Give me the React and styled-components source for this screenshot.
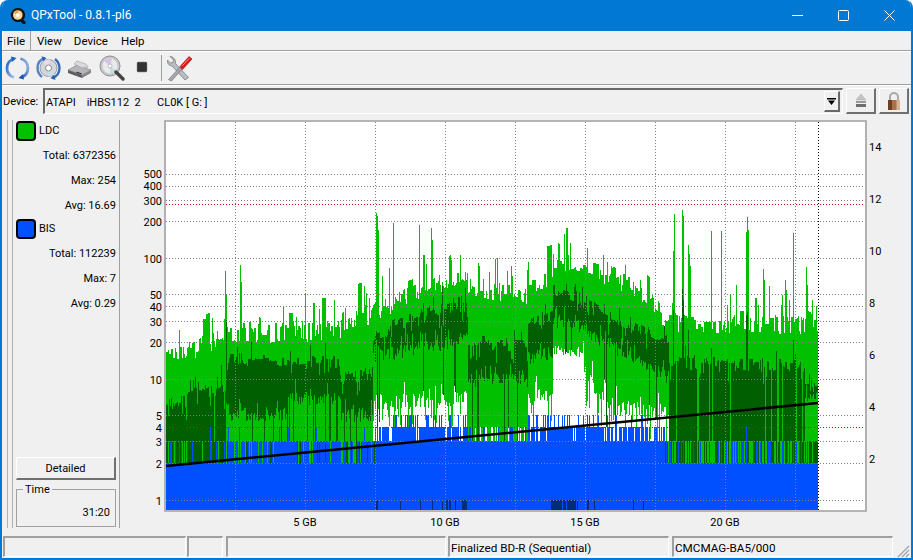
import React, { useMemo } from "react";
import styled, { createGlobalStyle } from "styled-components";

const Global = createGlobalStyle`
  html, body { margin: 0; padding: 0; background: #fff; }
  * { box-sizing: border-box; }
`;

const UI = `"Roboto", "Liberation Sans", sans-serif`;

const Window = styled.div`
  width: 913px; height: 560px; display: flex; flex-direction: column; overflow: hidden;
  background: #f0f0f0; border: solid #0078d4; border-width: 0 2px 2px 2px;
  border-radius: 8px 8px 0 0; font: 11px ${UI}; color: #000;
`;
const TitleBar = styled.div`
  height: 31px; flex: none; margin: 0 -2px; background: #0078d4; color: #fff; display: flex; align-items: center; padding: 0 1px 0 10px;
`;
const TitleText = styled.span` margin-left: 5px; font-size: 12px; flex: 1; position: relative; top: -0.5px; `;
const WinBtn = styled.div` width: 46px; height: 31px; display: flex; align-items: center; justify-content: center; `;
const MenuBar = styled.div`
  height: 20px; flex: none; display: flex; align-items: stretch; border-bottom: 1px solid #a0a0a0; font-size: 11.5px;
`;
const MenuItem = styled.div`
  display: flex; align-items: center; padding: 0 ${p => p.$pad}px;
  ${p => p.$active && `border-right: 1px solid #a0a0a0; border-left: 1px solid #fff; padding: 0 4px; width: 29px; background: #eee;`}
`;
const ToolBar = styled.div`
  height: 34px; flex: none; display: flex; align-items: center; padding-left: 3px; gap: 6px;
  border-top: 1px solid #fff; border-bottom: 1px solid #a0a0a0;
`;
const ToolSep = styled.div` width: 1px; height: 26px; background: #a0a0a0; margin-right: -1px; `;
const DeviceRow = styled.div`
  height: 31px; flex: none; display: flex; align-items: flex-start; padding: 2px 0 0 1px; border-top: 1px solid #fff;
`;
const DeviceLabel = styled.span` width: 40px; line-height: 27px; `;
const Combo = styled.div`
  width: 800px; height: 26px; border: solid; border-width: 2px 1px 1px 2px; border-color: #696969 #fff #fff #696969;
  background: #f0f0f0; display: flex; align-items: center; padding-left: 1px; justify-content: space-between; white-space: pre;
`;
const ComboText = styled.span` position: relative; top: 0.5px; `;
const ComboArrow = styled.div`
  width: 16px; height: 21px; margin-right: 2px; border: solid; border-width: 1px 2px 2px 1px; border-color: #fff #696969 #696969 #fff;
  display: flex; align-items: center; justify-content: center;
`;
const SquareBtn = styled.div`
  width: 30px; height: 26px; margin-left: 3px; border: solid; border-width: 1px 2px 2px 1px;
  border-color: #fff #707070 #707070 #fff; display: flex; align-items: center; justify-content: center;
`;
const Main = styled.div` flex: 1; min-height: 0; display: flex; padding: 4px 0 0 5px; `;
const Strip = styled.div` width: 6px; height: 408px; border: solid #b0b0b0; border-width: 0 1px; `;
const Sidebar = styled.div`
  width: 107px; height: 408px; border-right: 1px solid #a0a0a0; padding-left: 3px; display: flex; flex-direction: column;
`;
const LegendHead = styled.div` height: 21px; display: flex; align-items: center; gap: 3px; margin-bottom: 2px; `;
const Swatch = styled.div`
  width: 20px; height: 20px; border-radius: 4px; border: 2px solid #000; background: ${p => p.$c};
`;
const Stat = styled.div` height: 25px; line-height: 25px; text-align: right; padding-right: 3px; white-space: pre; `;
const Detailed = styled.div`
  margin-top: auto; width: 100px; height: 23px; display: flex; align-items: center; justify-content: center;
  border: solid; border-width: 1px 2px 2px 1px; border-color: #fff #707070 #707070 #fff;
`;
const TimeBox = styled.fieldset`
  margin: 5px 0 1px 0; padding: 0 4px 0 0; width: 100px; height: 42px; border: 1px solid #a0a0a0; text-align: right;
  legend { margin-left: 6px; padding: 0 2px; line-height: 9px; text-align: left; }
`;
const TimeVal = styled.div` line-height: 14px; margin-top: 12px; padding-right: 1px; `;
const ChartWrap = styled.div` flex: 1; margin-top: -4px; margin-left: 10px; `;
const StatusBar = styled.div` height: 22px; flex: none; margin-top: 6px; display: flex; padding-left: 1px; `;
const Cell = styled.div`
  width: ${p => p.$w}px; margin-right: ${p => p.$mr || 0}px; height: 21px; border: solid; border-width: 2px 1px 1px 2px;
  border-color: #a0a0a0 #fff #fff #a0a0a0; padding-left: 1px; line-height: 20px; font-size: 11.7px; white-space: nowrap;
`;
const Grip = styled.svg` flex: none; margin-left: 1px; align-self: flex-end; `;

const ChartText = styled.text`
  font: 11px ${UI}; fill: #000;
`;

function rng(seed) {
  let s = seed;
  return () => { s = (s * 1664525 + 1013904223) >>> 0; return s / 4294967296; };
}
// x, light top, dark top, dark bottom, lower-light start
const KF = [
  [166, 352, 405, 999, 999], [186, 352, 402, 999, 999], [188, 350, 385, 999, 999], [204, 345, 385, 999, 999],
  [206, 345, 395, 999, 999], [226, 335, 385, 400, 999], [228, 332, 360, 415, 999], [288, 333, 360, 415, 999],
  [289, 333, 362, 398, 999], [340, 330, 362, 398, 999], [341, 322, 378, 415, 999], [372, 315, 372, 415, 999],
  [373, 312, 338, 358, 402], [400, 300, 322, 352, 402], [467, 272, 300, 338, 400],
  [468, 286, 342, 380, 999], [527, 296, 345, 380, 999], [528, 284, 322, 358, 398], [552, 282, 316, 352, 395],
  [553, 262, 290, 320, 350], [578, 266, 298, 328, 352], [600, 275, 312, 340, 398], [640, 290, 327, 362, 412],
  [668, 322, 342, 378, 414], [669, 324, 362, 999, 999], [804, 324, 366, 999, 999], [805, 320, 380, 400, 999], [818, 325, 380, 398, 999],
];
const BL = [
  [228, .25, .03, 0, .12], [375, .75, .06, 0, .4], [400, 1, .85, .25, 0], [467, 1, .85, .35, 0], [527, .98, .12, 0, 0],
  [552, 1, .75, .55, 0], [600, 1, .9, .3, 0], [665, 1, .7, .08, 0], [819, .3, .04, 0, .28],
];
const SPIKES = {
  212: 318, 225: 271, 226: 295, 240: 265, 241: 282, 283: 307, 293: 321, 305: 293, 319: 309, 345: 308, 350: 324, 365: 305,
  376: 213, 377: 216, 378: 230, 393: 223, 389: 268, 419: 225, 431: 228, 432: 240, 497: 258, 460: 255, 489: 272,
  527: 270, 564: 234, 570: 243, 587: 248, 603: 255, 607: 262, 612: 268, 625: 265,
  674: 214, 673: 251, 682: 210, 683: 216, 688: 245, 689: 254, 690: 266, 711: 231, 721: 231, 736: 285, 747: 217, 748: 230, 746: 232, 763: 269, 764: 280,
  769: 286, 785: 280, 786: 290, 793: 233, 806: 267, 807: 285, 812: 300, 816: 306,
};
const DARK_SPIKES = { 673: 310, 682: 289, 683: 300, 688: 330, 746: 315, 747: 312, 793: 340, 226: 320 };
const Y3 = 441, Y2 = 463, Y4 = 427, Y5 = 415, BOT = 510;

function interp(x) {
  for (let i = 0; i < KF.length - 1; i++) {
    const a = KF[i], b = KF[i + 1];
    if (x >= a[0] && x <= b[0]) {
      const t = (x - a[0]) / (b[0] - a[0] || 1);
      return [1, 2, 3, 4].map(k => (a[k] > 900 || b[k] > 900) ? (t < 1 && a[k] > 900 ? 999 : b[k]) : a[k] + (b[k] - a[k]) * t);
    }
  }
  return KF[KF.length - 1].slice(1);
}

function buildPaths() {
  const r = rng(77);
  const p = { light: "", dark: "", blue: "", navy: "", deep: "" };
  const rect = (k, x, y1, y2) => { if (y2 > y1) p[k] += `M${x} ${Math.round(y1)}h1V${Math.round(y2)}h-1z`; };
  let hold = 0, holdD = 0;
  for (let x = 166; x < 818; x++) {
    const [lt0, dh0, dl0, g0] = interp(x);
    const b = BL.find(s => x < s[0]);
    let blue = Y2;
    if (r() < b[1]) blue = Y3;
    if (blue === Y3 && r() < b[2]) blue = Y4;
    if (blue === Y4 && r() < b[3]) blue = Y5;
    if (r() > 0.35) { hold = (r() - .5) * 20 + (r() < .13 ? -14 - r() * 18 : 0); }
    if (r() > 0.45) { holdD = (r() - .5) * 14; }
    let lt = lt0 + hold;
    if (SPIKES[x]) lt = SPIKES[x];
    let dh = dh0 + holdD + (r() < .08 ? 8 + r() * 10 : 0);
    if (r() < .06) dh -= 6 + r() * 12;
    if (DARK_SPIKES[x]) dh = DARK_SPIKES[x];
    const dl = dl0 > 900 ? 999 : dl0 + (r() - .5) * 14 + (r() < .15 ? -12 : 0);
    const inWhite = x >= 553 && x < 578;
    let g = g0 > 900 ? 999 : inWhite ? g0 + (r() - .5) * 10 : g0 + (r() - .5) * 16 + (r() < .2 ? 16 + r() * 20 : 0) + (r() < .12 ? -14 : 0);
    if (inWhite && r() < .03) g = 385 + r() * 30;
    const gapAtBlue = g0 < 900 || (x > 467 && x < 527 && r() < .2);
    rect("blue", x, blue, BOT);
    if (blue === Y2) {
      rect(r() < b[4] * 1.6 ? "light" : "dark", x, Y3, Y2);
    }
    let cursor = Math.min(blue, Y3);
    if (x > 467 && x < 527 && gapAtBlue) { g = Y4; }
    if (g < 900) cursor = Math.min(cursor, g);
    const lowTop = Math.max(dl > 900 ? dh : dl, lt);
    if (dl < 900) {
      const c = r() < .08 ? "dark" : "light";
      rect(c, x, lowTop, cursor);
      rect("dark", x, Math.max(dh, lt), lowTop);
    } else {
      rect(r() < .05 && cursor > 415 ? "light" : "dark", x, Math.max(dh, lt), cursor);
    }
    rect("light", x, lt, Math.max(dh, lt));
  }
  [[180, 463, 499], [213, 463, 499], [797, 463, 498]].forEach(([x, a, c]) => rect("deep", x, a, c));
  [[470, 441, 462], [481, 441, 462], [491, 441, 462], [516, 441, 462]].forEach(([x, a, c]) => rect("light", x, a, c));
  [[376, 2], [400, 1], [420, 1], [432, 1], [442, 1], [446, 2], [449, 2], [455, 1], [462, 5], [551, 11], [563, 3], [567, 9], [577, 1], [587, 2], [594, 1], [377, 1], [633, 1], [643, 1]].forEach(([x, w]) => {
    for (let i = 0; i < w; i++) rect("navy", x + i, 500, BOT);
  });
  return p;
}

const V_GRID = [235.5, 305.5, 375.5, 445.5, 515.5, 585.5, 655.5, 725.5, 795.5];
const H_GRID = [174.5, 186.5, 200.5, 221.5, 258.5, 294.5, 306.5, 321.5, 342.5, 379.5, 415.5, 427.5, 441.5, 463.5, 500.5];
const LEFT = [[500, 174], [400, 186], [300, 201], [200, 222], [100, 259], [50, 295], [40, 307], [30, 322], [20, 343], [10, 380], [5, 416], [4, 428], [3, 442], [2, 464], [1, 501]];
const RIGHT = [[14, 147], [12, 199], [10, 251], [8, 303], [6, 355], [4, 407], [2, 459]];
const BOTTOM = [["5 GB", 305], ["10 GB", 445], ["15 GB", 585], ["20 GB", 725]];

function Chart() {
  const p = useMemo(buildPaths, []);
  return (
    <svg width="760" height="420" viewBox="130 116 760 420" style={{ display: "block" }}>
      <rect x="165.5" y="121.5" width="700" height="389" fill="#fff" />
      <g shapeRendering="crispEdges">
        <path d={p.light} fill="#00c000" />
        <path d={p.dark} fill="#005f00" />
        <path d={p.deep} fill="#1d6a1d" />
        <path d={p.blue} fill="#0050ff" />
        <path d={p.navy} fill="#002c80" />
      </g>
      <g stroke="#808080" strokeDasharray="1 2" strokeWidth="1" shapeRendering="crispEdges">
        {V_GRID.map(x => <line key={x} x1={x} x2={x} y1="122" y2="510" />)}
        {H_GRID.map(y => <line key={y} x1="166" x2="865" y1={y} y2={y} />)}
      </g>
      <g stroke="#e00000" strokeDasharray="1 2" shapeRendering="crispEdges">
        <line x1="166" x2="865" y1="204.5" y2="204.5" />
        <line x1="166" x2="865" y1="427.5" y2="427.5" />
      </g>
      <line x1="818.5" x2="818.5" y1="122" y2="510" stroke="#000" strokeDasharray="1 2" shapeRendering="crispEdges" />
      <line x1="166" x2="818" y1="466" y2="403" stroke="#000" strokeWidth="2.6" />
      <path d="M165 511V121H866V511Z" fill="none" stroke="#a0a0a0" strokeWidth="1.6" />
      {LEFT.map(([t, y]) => <ChartText key={t} x="162" y={y + 4} textAnchor="end">{t}</ChartText>)}
      {RIGHT.map(([t, y]) => <ChartText key={t} x="869" y={y + 4}>{t}</ChartText>)}
      {BOTTOM.map(([t, x]) => <ChartText key={t} x={x} y="526" textAnchor="middle">{t}</ChartText>)}
    </svg>
  );
}

const Logo = () => (
  <svg width="16" height="18" viewBox="0 0 16 18">
    <path d="M8 1a7 7 0 1 0 2.5 13.5L13 17h2.500v-2l-2.200-2.400A7 7 0 0 0 8 1z" fill="#111" />
    <circle cx="7.800" cy="8" r="4.800" fill="#f5d79a" />
    <circle cx="7.800" cy="8" r="2" fill="#fff" />
    <path d="M4 6l3-2.500 2 .5-3 3z" fill="#e89a2c" />
  </svg>
);
const IconRefresh = () => (
  <svg width="25" height="26" viewBox="0 0 25 26">
    <defs>
      <linearGradient id="rg" x1="0" x2="1" y1="0" y2="1"><stop offset="0" stopColor="#1e5fb8" /><stop offset="1" stopColor="#a9c9ef" /></linearGradient>
      <linearGradient id="rg2" x1="1" x2="0" y1="0" y2="1"><stop offset="0" stopColor="#9fc2ec" /><stop offset="1" stopColor="#1c56ad" /></linearGradient>
    </defs>
    <path d="M9.500 3.500C4.500 5 2 9 2 13c0 4.500 2.600 8 7 9.500" fill="none" stroke="url(#rg)" strokeWidth="2.800" />
    <path d="M6 1.500l5.500 1.500L7 7z" fill="#1e5fb8" />
    <path d="M15.500 3.500C20.400 5 23 9 23 13c0 4.500-2.600 8-7 9.500" fill="none" stroke="url(#rg2)" strokeWidth="2.800" />
    <path d="M19 24.500l-5.500-1.500 4.500-4z" fill="#1c56ad" />
  </svg>
);
const IconCd = () => (
  <svg width="25" height="26" viewBox="0 0 25 26">
    <circle cx="12.500" cy="13" r="8.500" fill="#d4d6da" stroke="#9a9aa2" />
    <path d="M12.500 13L7 6.500A8.500 8.500 0 0 1 14 4.600z" fill="#e9d9e9" />
    <path d="M12.500 13l6 6a8.500 8.500 0 0 1-6 2.500z" fill="#c8e0e8" />
    <circle cx="12.500" cy="13" r="3" fill="#fff" stroke="#8a8a92" />
    <path d="M9 3C4 4.500 1.500 8.500 1.500 13S3.500 20 6 22" fill="none" stroke="#5585c8" strokeWidth="2.400" />
    <path d="M16 23c5-1.500 7.500-5.500 7.500-10S21.500 6 19 4" fill="none" stroke="#3a6bb5" strokeWidth="2.400" />
    <path d="M5.500 1.200l5 1.800-3.600 3.400zM19.500 25l-5-1.800 3.600-3.400z" fill="#2e62b0" />
  </svg>
);
const IconDrive = () => (
  <svg width="26" height="26" viewBox="0 0 26 26">
    <path d="M1 15l9-5 14 5-9 5z" fill="#b6b6ba" stroke="#7a7a80" strokeWidth=".6" />
    <path d="M1 15v3l14 5v-3z" fill="#5c5c62" />
    <path d="M15 20v3l9-5v-3z" fill="#85858b" />
    <path d="M7 9l3-3 9 3 2 3-6 1z" fill="#d8d8de" stroke="#9a9aa2" strokeWidth=".6" />
    <path d="M9 17.500l5 1.700 1-.6-5-1.800z" fill="#2c2c30" />
  </svg>
);
const IconSearch = () => (
  <svg width="26" height="26" viewBox="0 0 26 26">
    <circle cx="11" cy="11" r="10" fill="#c8c8cc" stroke="#8f8f95" />
    <circle cx="11" cy="11" r="7.500" fill="#e8eaec" />
    <path d="M11 11L5 6a7.500 7.500 0 0 1 8-2z" fill="#d5c5e5" />
    <path d="M11 11l6 4a7.500 7.500 0 0 1-6 3.500z" fill="#bfe0dc" />
    <circle cx="11" cy="11" r="2" fill="#fff" stroke="#999" strokeWidth=".6" />
    <path d="M17 17l7 7" stroke="#444" strokeWidth="3.400" strokeLinecap="round" />
  </svg>
);
const IconStop = () => (
  <svg width="24" height="26" viewBox="0 0 24 26"><rect x="6" y="7" width="10" height="10" rx="1" fill="#333" stroke="#8a8a8a" strokeWidth=".5" /></svg>
);
const IconTools = () => (
  <svg width="26" height="28" viewBox="0 0 26 28">
    <path d="M3 2.500l3.500 3.500-.5 2.500L3.500 9 0.500 6C0 9 1.500 11.500 5 12l13 14 3.500-2.500L8.500 9.500C9 6 6.500 2.500 3 2.500z" fill="#b9bcc0" stroke="#6f7276" strokeWidth=".7" />
    <path d="M1.500 25.500L13 13l2 2L4.500 27z" fill="#a8a8ac" stroke="#6a6a6e" strokeWidth=".6" />
    <path d="M13 12.500L22 2.500l3 2.500-9.500 10.500z" fill="#e01818" stroke="#9c1010" strokeWidth=".6" />
    <path d="M15 12L22.500 4" stroke="#ff8a8a" strokeWidth="1" />
  </svg>
);
const IconEject = () => (
  <svg width="12" height="13" viewBox="0 0 12 13">
    <path d="M6 0l5 6H1z" fill="#c4c4c4" stroke="#aaa" strokeWidth=".5" />
    <rect x="1" y="7" width="10" height="2" fill="#9a9a9a" />
    <rect x="1" y="10" width="10" height="3" fill="#6e6e6e" />
  </svg>
);
const IconLock = () => (
  <svg width="14" height="18" viewBox="0 0 14 18">
    <path d="M3 8V5a4 4 0 0 1 8 0v3" fill="none" stroke="#a8a8a8" strokeWidth="2" />
    <rect x="1" y="8" width="12" height="10" rx="1" fill="#a8714a" />
    <rect x="1" y="8" width="4" height="10" fill="#6c3f22" />
    <rect x="9.500" y="8" width="3.500" height="10" fill="#d8b494" />
  </svg>
);

export default function App() {
  return (
    <>
      <Global />
      <Window>
        <TitleBar>
          <Logo />
          <TitleText>QPxTool - 0.8.1-pl6</TitleText>
          <WinBtn><svg width="11" height="2"><rect width="11" height="1" fill="#fff" /></svg></WinBtn>
          <WinBtn><svg width="11" height="11"><rect x=".5" y=".5" width="10" height="10" rx="1" fill="none" stroke="#fff" /></svg></WinBtn>
          <WinBtn><svg width="11" height="11"><path d="M.5.5l10 10M10.500.5l-10 10" stroke="#fff" /></svg></WinBtn>
        </TitleBar>
        <MenuBar>
          <MenuItem $active>File</MenuItem>
          <MenuItem $pad={6}>View</MenuItem>
          <MenuItem $pad={6}>Device</MenuItem>
          <MenuItem $pad={7}>Help</MenuItem>
        </MenuBar>
        <ToolBar>
          <IconRefresh /><IconCd /><IconDrive /><IconSearch /><IconStop />
          <ToolSep />
          <IconTools />
        </ToolBar>
        <DeviceRow>
          <DeviceLabel>Device:</DeviceLabel>
          <Combo>
            <ComboText>ATAPI    iHBS112  2      CL0K [ G: ]</ComboText>
            <ComboArrow><svg width="9" height="7"><path d="M0 0h9v1.500H0zM1 2.500h7L4.500 7z" fill="#000" /></svg></ComboArrow>
          </Combo>
          <SquareBtn><IconEject /></SquareBtn>
          <SquareBtn><IconLock /></SquareBtn>
        </DeviceRow>
        <Main>
          <Strip />
          <Sidebar>
            <LegendHead><Swatch $c="#00c000" /><span>LDC</span></LegendHead>
            <Stat>Total: 6372356</Stat>
            <Stat>Max: 254</Stat>
            <Stat>Avg: 16.69</Stat>
            <LegendHead><Swatch $c="#0050ff" /><span>BIS</span></LegendHead>
            <Stat>Total: 112239</Stat>
            <Stat>Max: 7</Stat>
            <Stat>Avg: 0.29</Stat>
            <Detailed>Detailed</Detailed>
            <TimeBox>
              <legend>Time</legend>
              <TimeVal>31:20</TimeVal>
            </TimeBox>
          </Sidebar>
          <ChartWrap><Chart /></ChartWrap>
        </Main>
        <StatusBar>
          <Cell $w={183} $mr={1} />
          <Cell $w={36} $mr={3} />
          <Cell $w={220} $mr={2} />
          <Cell $w={221} $mr={3}>Finalized BD-R (Sequential)</Cell>
          <Cell $w={221}>CMCMAG-BA5/000</Cell>
          <Grip width="16" height="16" viewBox="0 0 16 16">
            <path d="M15 4L4 15M15 8l-7 7M15 12l-3 3" stroke="#a0a0a0" strokeWidth="1.200" />
          </Grip>
        </StatusBar>
      </Window>
    </>
  );
}
